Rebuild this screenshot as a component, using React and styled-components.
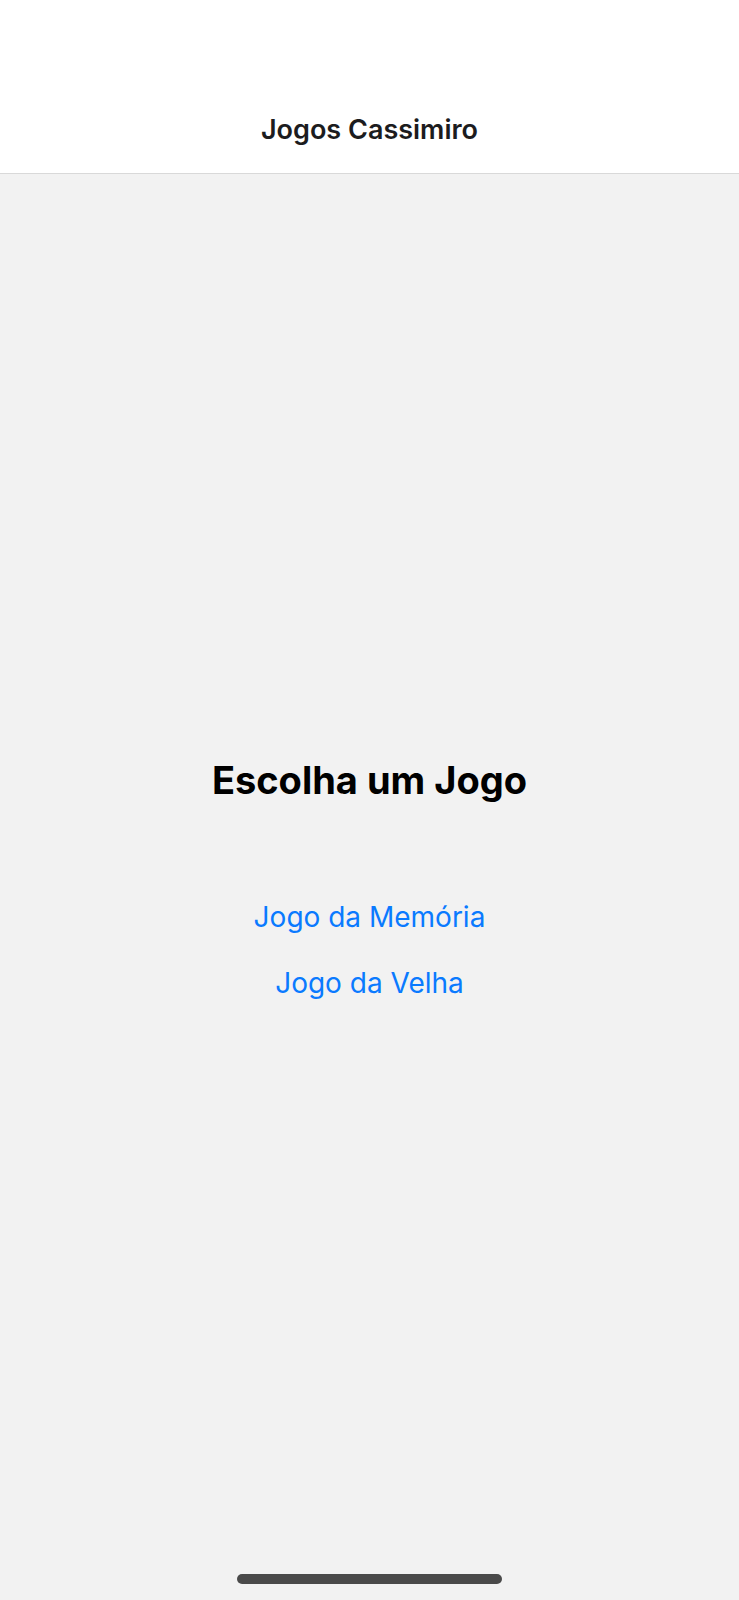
import styled, { createGlobalStyle } from "styled-components";

const GlobalStyle = createGlobalStyle`
  html, body {
    margin: 0;
    padding: 0;
    background: #f2f2f2;
    font-family: Inter, "Noto Sans", "Liberation Sans", sans-serif;
  }
`;

const Screen = styled.div`
  display: flex;
  flex-direction: column;
  width: 739px;
  height: 1600px;
  background: #f2f2f2;
  overflow: hidden;
`;

const Header = styled.header`
  height: 174px;
  display: flex;
  align-items: flex-end;
  justify-content: center;
  padding-bottom: 26px;
  box-sizing: border-box;
  background: #ffffff;
  border-bottom: 1px solid #d9d9d9;
`;

const HeaderTitle = styled.h1`
  margin: 0;
  font-size: 27px;
  line-height: 34px;
  font-weight: 600;
  color: #1c1c1e;
`;

const Main = styled.main`
  flex: 1;
  display: flex;
  flex-direction: column;
  align-items: center;
  justify-content: center;
  padding-top: 9px;
`;

const Title = styled.h2`
  margin: 0 0 97px 0;
  font-size: 38px;
  line-height: 46px;
  font-weight: 700;
  color: #000000;
`;

const GameList = styled.nav`
  display: flex;
  flex-direction: column;
  align-items: center;
  gap: 32px;
`;

const GameLink = styled.a`
  font-size: 28px;
  line-height: 34px;
  color: #0a7aff;
  text-decoration: none;
  cursor: pointer;
`;

const HomeArea = styled.div`
  height: 26px;
  display: flex;
  justify-content: center;
  align-items: flex-start;
`;

const HomeIndicator = styled.div`
  width: 265px;
  height: 10px;
  border-radius: 5px;
  background: #4a4a4a;
`;

const games = ["Jogo da Memória", "Jogo da Velha"];

export default function App() {
  return (
    <>
      <GlobalStyle />
      <Screen>
        <Header>
          <HeaderTitle>Jogos Cassimiro</HeaderTitle>
        </Header>
        <Main>
          <Title>Escolha um Jogo</Title>
          <GameList>
            {games.map((g) => (
              <GameLink key={g}>{g}</GameLink>
            ))}
          </GameList>
        </Main>
        <HomeArea>
          <HomeIndicator />
        </HomeArea>
      </Screen>
    </>
  );
}
